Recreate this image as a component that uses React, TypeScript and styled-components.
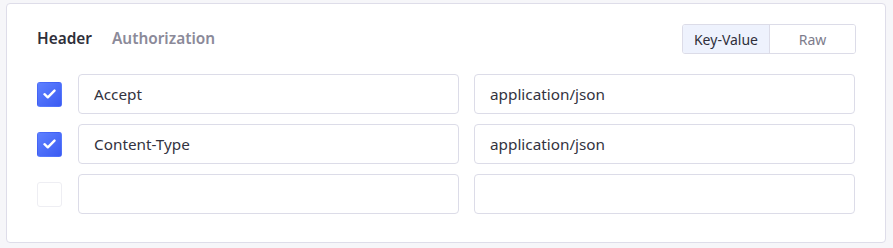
import React, { useState } from 'react';
import styled, { createGlobalStyle } from 'styled-components';

interface Row {
  key: string;
  value: string;
  enabled: boolean;
}

const initialRows: Row[] = [
  { key: 'Accept', value: 'application/json', enabled: true },
  { key: 'Content-Type', value: 'application/json', enabled: true },
  { key: '', value: '', enabled: false },
];

const App = () => {
  const [rows, setRows] = useState<Row[]>(initialRows);
  const [tab, setTab] = useState('header');
  const [mode, setMode] = useState('kv');

  const toggle = (i: number) => {
    setRows(rows.map((r, idx) => (idx === i ? { ...r, enabled: !r.enabled } : r)));
  };

  const update = (i: number, field: 'key' | 'value', val: string) => {
    setRows(rows.map((r, idx) => (idx === i ? { ...r, [field]: val } : r)));
  };

  return (
    <>
      <GlobalStyle />
      <Page>
        <Card>
          <TopBar>
            <Tabs>
              <Tab active={tab === 'header'} onClick={() => setTab('header')}>
                Header
              </Tab>
              <Tab active={tab === 'auth'} onClick={() => setTab('auth')}>
                Authorization
              </Tab>
            </Tabs>
            <Segmented>
              <Segment active={mode === 'kv'} onClick={() => setMode('kv')}>
                Key-Value
              </Segment>
              <Segment active={mode === 'raw'} onClick={() => setMode('raw')}>
                Raw
              </Segment>
            </Segmented>
          </TopBar>
          <Rows>
            {rows.map((row, i) => (
              <RowLine key={i}>
                <Check checked={row.enabled} onClick={() => toggle(i)}>
                  {row.enabled && (
                    <svg width="13" height="10" viewBox="0 0 13 10">
                      <path
                        d="M1.5 5.2 L4.8 8.3 L11.5 1.6"
                        fill="none"
                        stroke="#fff"
                        strokeWidth="2.4"
                        strokeLinecap="round"
                        strokeLinejoin="round"
                      />
                    </svg>
                  )}
                </Check>
                <Field value={row.key} onChange={(e) => update(i, 'key', e.target.value)} />
                <Field value={row.value} onChange={(e) => update(i, 'value', e.target.value)} />
              </RowLine>
            ))}
          </Rows>
        </Card>
      </Page>
    </>
  );
};

export default App;

const GlobalStyle = createGlobalStyle`
  html, body {
    margin: 0;
    padding: 0;
    background: #f6f6f9;
  }
  * {
    box-sizing: border-box;
  }
`;

const Page = styled.div`
  width: 893px;
  height: 248px;
  padding: 3px 7px 0 6px;
  font-family: 'Noto Sans', 'Open Sans', sans-serif;
`;

const Card = styled.div`
  width: 880px;
  height: 240px;
  background: #fff;
  border: 1px solid #dedde9;
  border-radius: 4px;
  padding: 20px 29px 0 30px;
`;

const TopBar = styled.div`
  display: flex;
  align-items: center;
  justify-content: space-between;
  height: 30px;
`;

const Tabs = styled.div`
  display: flex;
  gap: 20px;
  padding-bottom: 1px;
`;

const Tab = styled.div<{ active?: boolean }>`
  font-size: 15.4px;
  font-weight: 600;
  color: ${(p) => (p.active ? '#2f2f3a' : '#8b8a99')};
  cursor: pointer;
`;

const Segmented = styled.div`
  display: flex;
  height: 30px;
  border: 1px solid #dcdce8;
  border-radius: 3px;
  overflow: hidden;
`;

const Segment = styled.div<{ active?: boolean }>`
  width: 86px;
  display: flex;
  align-items: center;
  justify-content: center;
  font-size: 14px;
  color: ${(p) => (p.active ? '#2f2f3a' : '#7d7c8c')};
  background: ${(p) => (p.active ? '#eef2fd' : '#fff')};
  cursor: pointer;
  & + & {
    border-left: 1px solid #dcdce8;
  }
`;

const Rows = styled.div`
  display: flex;
  flex-direction: column;
  gap: 10px;
  margin-top: 20px;
`;

const RowLine = styled.div`
  display: flex;
  align-items: center;
  gap: 15px;
`;

const Check = styled.div<{ checked: boolean }>`
  width: 25px;
  height: 25px;
  margin-right: 1px;
  border-radius: 3px;
  display: flex;
  align-items: center;
  justify-content: center;
  cursor: pointer;
  background: ${(p) => (p.checked ? 'linear-gradient(135deg, #5d80ff, #3b5bf2)' : '#fff')};
  border: 1px solid ${(p) => (p.checked ? 'transparent' : '#eeeef3')};
`;

const Field = styled.input`
  width: 381px;
  height: 40px;
  border: 1px solid #dcdce8;
  border-radius: 4px;
  padding: 0 15px;
  font-family: inherit;
  font-size: 15.3px;
  color: #333340;
  outline: none;
  background: #fff;
`;
